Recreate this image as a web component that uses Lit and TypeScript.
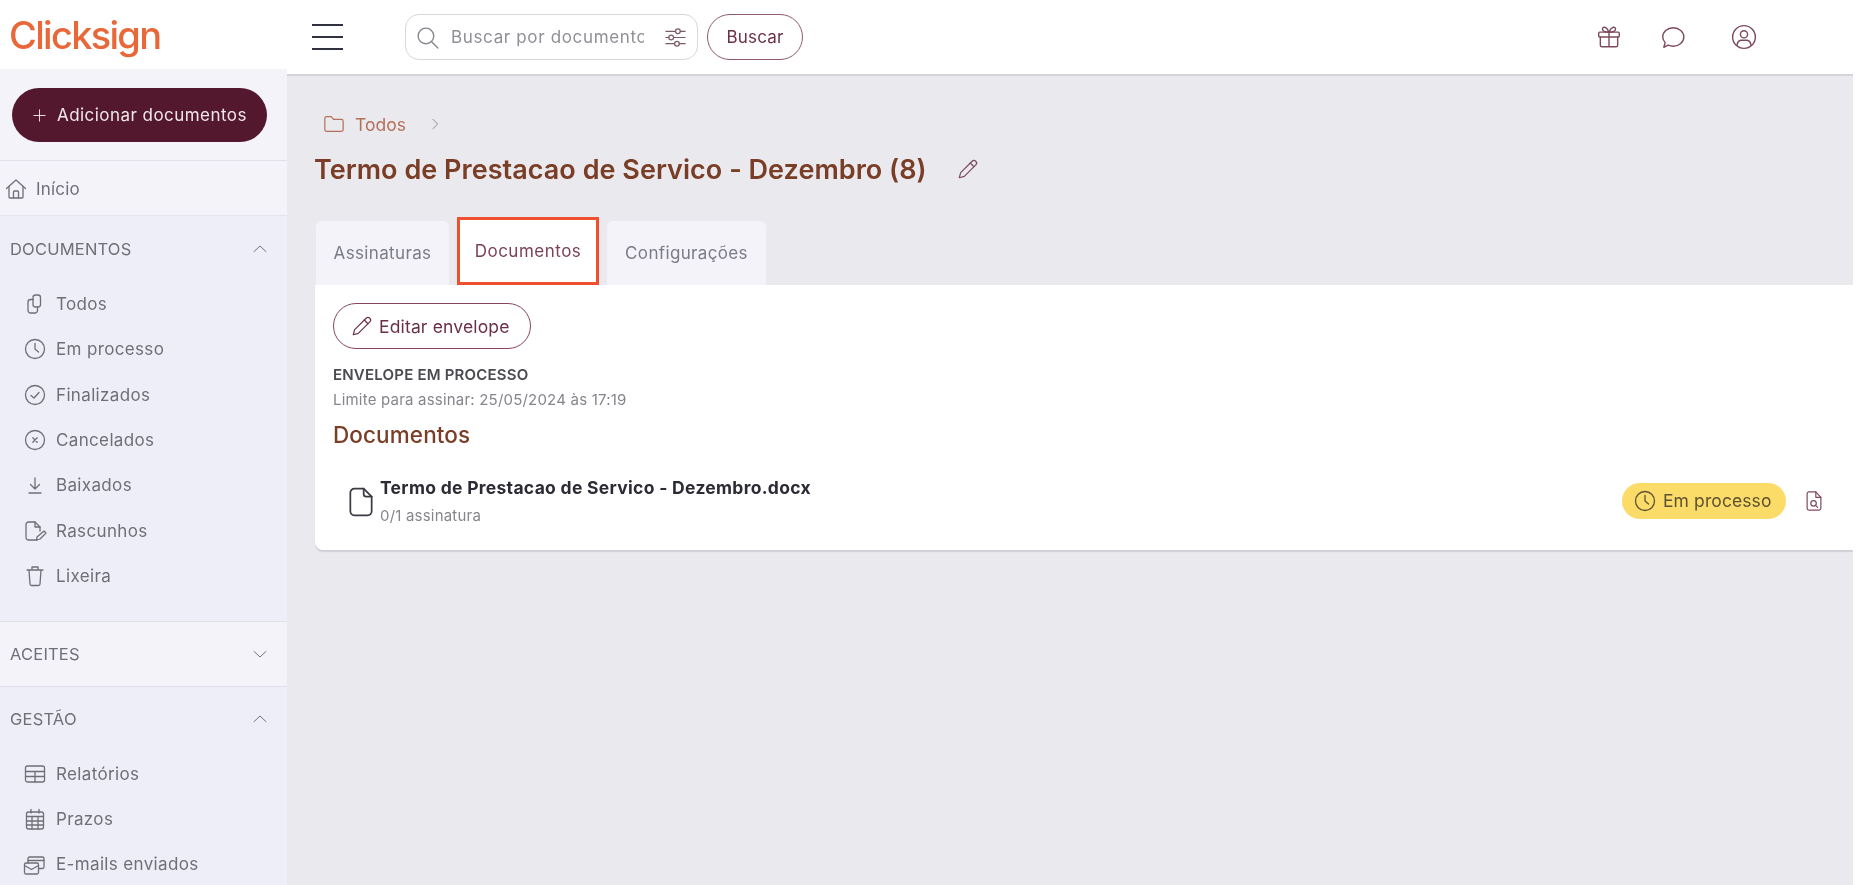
import { LitElement, html, css, svg } from "lit";
import { customElement } from "lit/decorators.js";

const ic = (body: unknown, size = 20, cls = "") => html`<svg class="ic ${cls}" width=${size} height=${size} viewBox="0 0 24 24" fill="none" stroke="currentColor" stroke-width="1.300" stroke-linecap="round" stroke-linejoin="round">${body}</svg>`;

const P = {
  plus: svg`<path d="M12 4v16M4 12h16"/>`,
  home: svg`<path d="M2.5 11.5 12 3l9.500 8.500"/><path d="M5 9.500V20a1 1 0 0 0 1 1h12a1 1 0 0 0 1-1V9.500"/><path d="M9.500 21v-6a1 1 0 0 1 1-1h3a1 1 0 0 1 1 1v6"/>`,
  up: svg`<path d="m4 15.500 8-7.500 8 7.500"/>`,
  down: svg`<path d="m4 8.500 8 7.500 8-7.500"/>`,
  copy: svg`<path d="M10 5.500A2.500 2.500 0 0 1 12.500 3H15a2.500 2.500 0 0 1 2.500 2.500v7A2.500 2.500 0 0 1 15 15h-2.500a2.500 2.500 0 0 1-2.500-2.500z"/><path d="M10 7.500H7.500A2.500 2.500 0 0 0 5 10v8.500A2.500 2.500 0 0 0 7.500 21H12a2.500 2.500 0 0 0 2.500-2.500V15"/>`,
  clock: svg`<circle cx="12" cy="12" r="9.500"/><path d="M12 6.500V12l3.500 3"/>`,
  check: svg`<circle cx="12" cy="12" r="9.500"/><path d="m8 12.500 3 2.500 5-5.500"/>`,
  cancel: svg`<circle cx="12" cy="12" r="9.500"/><path d="m9.800 9.800 4.400 4.400M14.200 9.800l-4.400 4.400"/>`,
  download: svg`<path d="M12 5v11M7.500 11.500l4.500 4.500 4.500-4.500M6 20h12"/>`,
  draft: svg`<path d="M14 21H5.500A2.500 2.500 0 0 1 3 18.500v-13A2.500 2.500 0 0 1 5.500 3H12l5 5v4"/><path d="M12 3v5h5"/><path d="m14 18 7-6 2 2-6 6-3.500 1z"/>`,
  trash: svg`<path d="M4 6h16M9 6V3h6v3M6 6l1 14a1.500 1.500 0 0 0 1.500 1.500h7A1.500 1.500 0 0 0 17 20l1-14"/>`,
  table: svg`<rect x="2.500" y="4" width="19" height="16" rx="2"/><path d="M2.500 9.500h19M2.500 14.500h19M12 9.500V20"/>`,
  cal: svg`<rect x="3.500" y="5" width="17" height="17" rx="2"/><path d="M8 2.500V6M16 2.500V6M3.500 9.500h17M3.500 14h17M3.500 18h17M9 9.500V22M15 9.500V22"/>`,
  mails: svg`<rect x="1.500" y="11" width="14" height="11" rx="1.500"/><path d="m1.500 13.500 7 4 7-4"/><path d="M5 11V6.500A1.500 1.500 0 0 1 6.500 5h13A1.500 1.500 0 0 1 21 6.500V15a1.500 1.500 0 0 1-1.500 1.500h-4"/><path d="M5 8.500h16"/>`,
  search: svg`<circle cx="10.500" cy="10.500" r="7.500"/><path d="m16 16 6 6"/>`,
  sliders: svg`<path d="M2 5.500h10M17 5.500h5M2 12h3M10 12h12M2 18.500h9M16 18.500h6"/><circle cx="14.500" cy="5.500" r="2.500"/><circle cx="7.500" cy="12" r="2.500"/><circle cx="13.500" cy="18.500" r="2.500"/>`,
  gift: svg`<rect x="2.500" y="7.500" width="19" height="4.500" rx="1"/><path d="M4 12v7.500A1.500 1.500 0 0 0 5.500 21h13a1.500 1.500 0 0 0 1.500-1.500V12M12 7.500V21"/><path d="M12 7.500C10 3 6.500 1.500 6 4.500 5.700 6.500 8 7.500 12 7.500ZM12 7.500c2-4.500 5.500-6 6-3 .3 2-2 3-6 3Z"/>`,
  chat: svg`<path d="M3.500 21.500l1.300-4.300A8.500 8.500 0 0 1 2.500 12c0-4.700 4.300-8.500 9.750-8.500S22 7.300 22 12s-4.300 8.500-9.750 8.500c-1.700 0-3.300-.4-4.700-1z"/>`,
  user: svg`<circle cx="12" cy="12" r="10.500"/><circle cx="12" cy="9.500" r="3.300"/><path d="M5.500 19.500c.5-3 2.500-4.500 4.500-4.500h4c2 0 4 1.500 4.500 4.500"/>`,
  folder: svg`<path d="M2 6a2 2 0 0 1 2-2h5l2.500 3H20a2 2 0 0 1 2 2v9a2 2 0 0 1-2 2H4a2 2 0 0 1-2-2z"/>`,
  chev: svg`<path d="m8.500 4 8 8-8 8"/>`,
  pencil: svg`<path d="M16.500 3.500a2.600 2.600 0 0 1 4 4L8 20l-5.500 1.500L4 16z"/><path d="m14.500 5.500 4 4"/>`,
  file: svg`<path d="M14 2H7a3 3 0 0 0-3 3v14a3 3 0 0 0 3 3h10a3 3 0 0 0 3-3V8z"/><path d="M14 2v4a2 2 0 0 0 2 2h4"/>`,
  fileSearch: svg`<path d="M14 2H6.500A2 2 0 0 0 4.500 4v16a2 2 0 0 0 2 2h11a2 2 0 0 0 2-2V8z"/><path d="M14 2v6h5.500"/><circle cx="11.500" cy="14.500" r="3"/><path d="m14 17 2 2"/>`,
};

const docs: [unknown, string][] = [
  [P.copy, "Todos"], [P.clock, "Em processo"], [P.check, "Finalizados"], [P.cancel, "Cancelados"],
  [P.download, "Baixados"], [P.draft, "Rascunhos"], [P.trash, "Lixeira"],
];
const gestao: [unknown, string][] = [[P.table, "Relatórios"], [P.cal, "Prazos"], [P.mails, "E-mails enviados"]];

@customElement("app-root")
export class AppRoot extends LitElement {
  static styles = css`
    :host { display: block; width: 1856px; height: 885px; overflow: hidden; background: #fff;
      font-family: Inter, "Noto Sans", sans-serif; color: #6f6f78; }
    * { box-sizing: border-box; }
    .ic { flex: none; display: block; }
    .app { display: grid; grid-template-columns: 287px 1566px 3px; height: 885px; filter: blur(.4px); }

    .side { background: #edeef7; height: 885px; overflow: hidden; }
    .logo { height: 69px; background: #fff; padding-left: 9px; display: flex; align-items: center;
      font-size: 38px; font-weight: 500; letter-spacing: -1.700px; color: #e8683a; }
    .addwrap { background: #f3f3f9; height: 92px; padding: 19px 0 0 12px; border-bottom: 1px solid #dfe0ea; }
    .add { width: 255px; height: 54px; border-radius: 27px; background: #54182e; color: #f0e8ea;
      display: flex; align-items: center; gap: 9px; padding-left: 19px; font-size: 17px; letter-spacing: .45px; white-space: nowrap; }
    .home { background: #f3f3f9; height: 55px; display: flex; align-items: center; gap: 8px; padding: 1px 0 0 4px;
      font-size: 17px; letter-spacing: .2px; border-bottom: 1px solid #e3e4ee; }
    .head { height: 65.500px; display: flex; align-items: center; justify-content: space-between;
      padding: 0 18px 0 10px; font-size: 16.500px; letter-spacing: .2px; }
    .head.gestao { height: 64px; padding-bottom: 1px; }
    .item { height: 45.300px; display: flex; align-items: center; gap: 9px; padding-left: 23px; font-size: 17px; letter-spacing: .35px; }
    .items { padding-bottom: 22.500px; border-bottom: 1px solid #dfe0ea; }
    .head.accept { background: #f3f3f9; border-bottom: 1px solid #dfe0ea; height: 65px; }

    .main { background: #e9e9ee; height: 885px; overflow: hidden; }
    .top { height: 76px; background: #fff; border-bottom: 2px solid #d3d3d9; display: flex; align-items: center;
      padding-left: 25px; color: #7d4a5c; }
    .burger { width: 31px; display: grid; gap: 9.500px; margin-right: 62px; }
    .burger i { display: block; height: 2.500px; background: #30323f; }
    .search { width: 293px; height: 46px; border: 1.500px solid #d8d8dc; border-radius: 14px; display: flex; align-items: center;
      padding-left: 9px; color: #85858c; }
    .search span { width: 193px; margin-left: 11px; overflow: hidden; white-space: nowrap; font-size: 17px; letter-spacing: .65px; color: #8f8f97; }
    .search .ic:last-child { margin-left: 20px; color: #7d5a68; }
    .buscar { margin-left: 9px; width: 96px; height: 46px; border: 1.500px solid #8f5a6c; border-radius: 23px; display: flex;
      align-items: center; justify-content: center; font-size: 17px; letter-spacing: .2px; color: #6b3049; }
    .actions { margin-left: auto; display: flex; align-items: center; gap: 38px; padding-right: 96px; }
    .actions .ic:last-child { margin-left: 7px; }

    .crumb { display: flex; align-items: center; padding: 30px 0 0 36px; height: 36px; box-sizing: content-box; color: #b5705a; font-size: 17.500px; }
    .crumb span { margin-left: 10px; }
    .crumb .next { margin-left: 22px; color: #6f6f78; }
    .title { display: flex; align-items: center; gap: 30px; margin: 4px 0 0 27px; height: 46px; font-size: 27px; letter-spacing: .03px; font-weight: 600; color: #7a3d26; white-space: nowrap; }
    .title .ic { color: #7d4a5c; }
    .tabs { display: flex; margin: 25px 0 0 29px; height: 68px; align-items: flex-end; }
    .tab { width: 133px; height: 64px; background: #f3f3f9; border-radius: 6px 6px 0 0; display: flex; align-items: center;
      justify-content: center; font-size: 17px; letter-spacing: .35px; color: #7b7b84; }
    .tab.on { width: 142px; height: 68px; margin: 0 8px; background: #fff; border: 3px solid #ee4f2e; border-radius: 0; color: #7b3f56; letter-spacing: .5px; }
    .tab.last { width: 159px; }
    .card { margin-left: 28px; height: 265px; background: #fff; border-radius: 0 0 0 8px; box-shadow: 0 2px 1px #d0d0d6;
      padding: 18px 0 0 18px; }
    .edit { width: 198px; height: 46px; border: 1.500px solid #85465c; border-radius: 23px; display: flex; align-items: center;
      gap: 6px; padding-left: 17px; font-size: 17.500px; letter-spacing: .15px; color: #6b3049; white-space: nowrap; }
    .state { margin-top: 16px; font-size: 15px; letter-spacing: .2px; line-height: 20px; font-weight: 600; color: #4a4a52; }
    .limit { margin-top: 5px; font-size: 15px; letter-spacing: .2px; line-height: 20px; color: #85858c; }
    .dh { margin-top: 10px; font-size: 22.500px; letter-spacing: .1px; line-height: 30px; font-weight: 500; color: #7a3d26; }
    .row { display: flex; align-items: center; margin-top: 27px; padding-left: 12px; padding-right: 28px; }
    .fileic { color: #3a3a44; margin-right: 3px; }
    .fname { font-size: 17.500px; letter-spacing: .3px; line-height: 22px; font-weight: 700; color: #2b2b35; white-space: nowrap; }
    .fsub { margin-top: 7px; font-size: 15px; letter-spacing: .2px; line-height: 20px; color: #85858c; }
    .pill { margin: 0 0 2px auto; width: 164px; height: 36px; border-radius: 18px; background: #fbdc68; color: #5d5233; display: flex;
      align-items: center; gap: 6px; padding-left: 11px; font-size: 17.500px; letter-spacing: .1px; white-space: nowrap; }
    .view { margin: 0 0 2px 17px; color: #7d4a5c; }
  `;

  private rows(list: [unknown, string][]) {
    return list.map(([i, t]) => html`<div class="item">${ic(i, 24)}<span>${t}</span></div>`);
  }

  render() {
    return html`<div class="app">
      <aside class="side">
        <div class="logo">Clicksign</div>
        <div class="addwrap"><div class="add">${ic(P.plus, 17)}<span>Adicionar documentos</span></div></div>
        <div class="home">${ic(P.home, 24)}<span>Início</span></div>
        <div class="head"><span>DOCUMENTOS</span>${ic(P.up, 18)}</div>
        <div class="items">${this.rows(docs)}</div>
        <div class="head accept"><span>ACEITES</span>${ic(P.down, 18)}</div>
        <div class="head gestao"><span>GESTÃO</span>${ic(P.up, 18)}</div>
        <div>${this.rows(gestao)}</div>
      </aside>
      <main class="main">
        <header class="top">
          <div class="burger"><i></i><i></i><i></i></div>
          <div class="search">${ic(P.search, 25)}<span>Buscar por documento</span>${ic(P.sliders, 23)}</div>
          <div class="buscar">Buscar</div>
          <div class="actions">${ic(P.gift, 26)}${ic(P.chat, 26)}${ic(P.user, 26)}</div>
        </header>
        <div class="crumb">${ic(P.folder, 22)}<span>Todos</span>${ic(P.chev, 14, "next")}</div>
        <div class="title"><span>Termo de Prestacao de Servico - Dezembro (8)</span>${ic(P.pencil, 22)}</div>
        <div class="tabs">
          <div class="tab">Assinaturas</div>
          <div class="tab on">Documentos</div>
          <div class="tab last">Configurações</div>
        </div>
        <section class="card">
          <div class="edit">${ic(P.pencil, 22)}<span>Editar envelope</span></div>
          <div class="state">ENVELOPE EM PROCESSO</div>
          <div class="limit">Limite para assinar: 25/05/2024 às 17:19</div>
          <div class="dh">Documentos</div>
          <div class="row">
            ${ic(P.file, 32, "fileic")}
            <div><div class="fname">Termo de Prestacao de Servico - Dezembro.docx</div><div class="fsub">0/1 assinatura</div></div>
            <div class="pill">${ic(P.clock, 24)}<span>Em processo</span></div>
            ${ic(P.fileSearch, 22, "view")}
          </div>
        </section>
      </main>
      <div></div>
    </div>`;
  }
}
